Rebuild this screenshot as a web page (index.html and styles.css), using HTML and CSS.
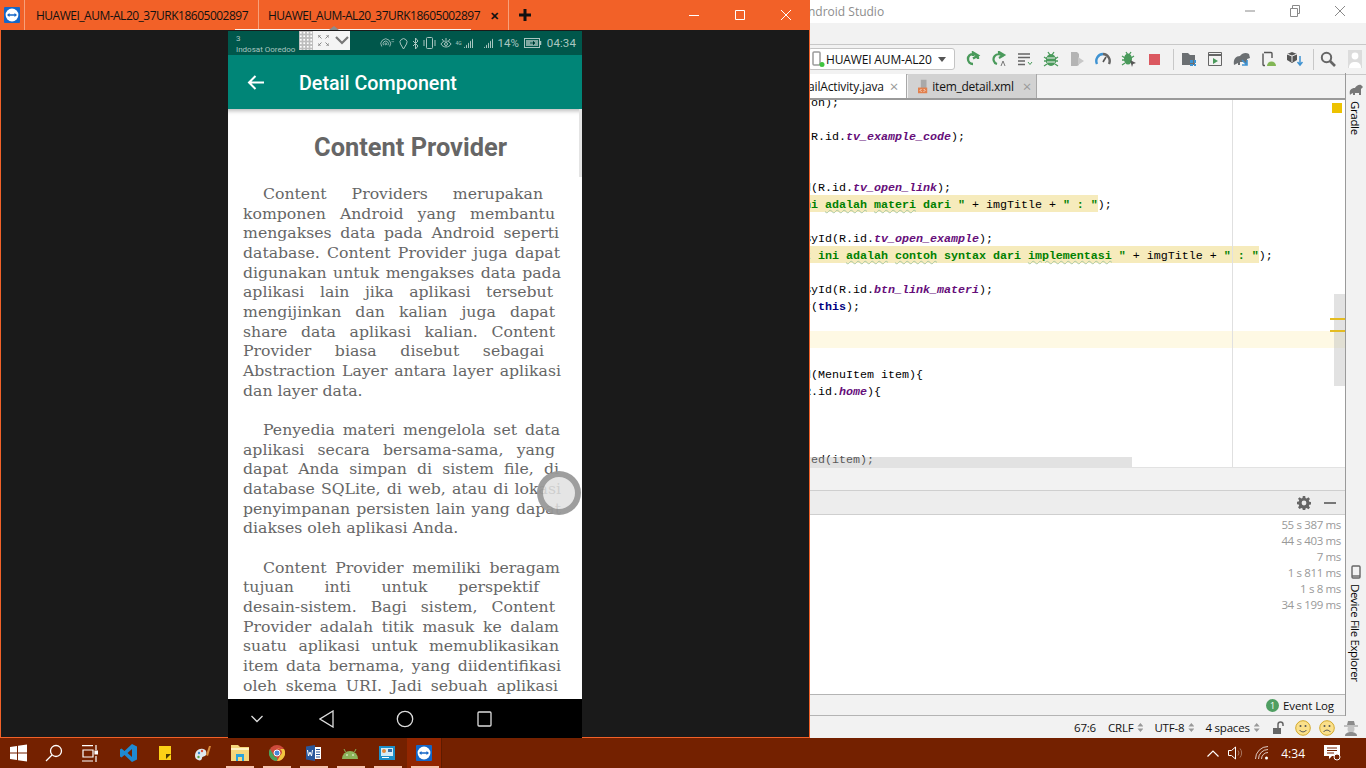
FILE: index.html
```html
<!DOCTYPE html>
<html lang="id">

<head>
    <meta charset="UTF-8">
    <title>Detail Component</title>
    <link rel="stylesheet" href="styles.css">
</head>

<body>

    <!-- Android Studio, sits behind the TeamViewer window -->
    <div class="studio">
        <div class="studio-title">
            <span class="studio-name">ndroid Studio</span>
            <div class="win-btns">
                <svg width="14" height="14" viewBox="0 0 14 14"><path d="M2 7h10" stroke="#8a8a8a"/></svg>
                <svg width="14" height="14" viewBox="0 0 14 14" fill="none" stroke="#8a8a8a"><path d="M2.5 4.5h7v8h-7zM4.5 4.5v-3h7v8h-2"/></svg>
                <svg width="14" height="14" viewBox="0 0 14 14" stroke="#8a8a8a"><path d="M2 2l10 10M12 2L2 12"/></svg>
            </div>
        </div>
        <div class="studio-menu"></div>
        <div class="toolbar">
            <div class="device-box">
                <svg width="13" height="17" viewBox="0 0 13 17"><rect x="1" y="1" width="7" height="13" rx="1" fill="none" stroke="#9a9a9a" stroke-width="1.500"/><circle cx="10" cy="13.500" r="2.500" fill="#3fc43f"/></svg>
                <span class="device-name">HUAWEI AUM-AL20</span>
                <i class="device-arrow"></i>
            </div>
            <div class="tools">
                <svg width="16" height="16" viewBox="0 0 16 16" fill="none" stroke="#4a9a5b" stroke-width="2.4"><path d="M13 8a5 5 0 1 0-5 5M8 5V1.5l5 3-5 3"/></svg>
                <svg width="16" height="16" viewBox="0 0 16 16" fill="none" stroke="#4a9a5b" stroke-width="2.2"><path d="M12 6a5 5 0 1 0-6 7M8 4V1l5 3-5 3"/><path d="M10 15l2-5 2 5" stroke="#777" stroke-width="1"/></svg>
                <svg width="16" height="16" viewBox="0 0 16 16" fill="none" stroke="#666" stroke-width="1.6"><path d="M1 3h12M1 6.5h12M1 10h7M1 13.5h7"/><path d="M11 11l2 2.5 2-2.5" stroke="#4a9a5b" stroke-width="1"/></svg>
                <svg width="16" height="16" viewBox="0 0 16 16"><ellipse cx="8" cy="9" rx="5" ry="6" fill="#4a9a5b"/><path d="M1 6l3 2M15 6l-3 2M1 10h3M15 10h-3M1 15l3-2M15 15l-3-2M3 7h10M3 11h10M5 1l2 3M11 1L9 4" stroke="#4a9a5b" stroke-width="1.3"/><path d="M4 7h8M4 11h8" stroke="#f2f2f2"/></svg>
                <svg width="16" height="16" viewBox="0 0 16 16"><path d="M2 1h6l2 2v11l-2 1H2z" fill="#b4b4b4"/><path d="M9 6l6 4-6 4z" fill="#c8c8c8"/></svg>
                <svg width="16" height="16" viewBox="0 0 16 16" fill="none"><path d="M2 13a7 7 0 0 1 6-10" stroke="#3f93d2" stroke-width="2.4"/><path d="M8 3a7 7 0 0 1 6 10" stroke="#666" stroke-width="2.4"/><path d="M8 11l3-5" stroke="#555" stroke-width="1.6"/></svg>
                <svg width="16" height="16" viewBox="0 0 16 16"><ellipse cx="7" cy="8" rx="4" ry="5.5" fill="#4a9a5b"/><path d="M1 5l3 2M13 5l-3 2M1 9h3M1 14l3-2M5 1l2 3M10 1L8 4" stroke="#4a9a5b" stroke-width="1.3"/><path d="M9 9l6 3-3 1-1 3z" fill="#555"/></svg>
                <span class="stop"></span>
                <span class="tool-sep"></span>
                <svg width="16" height="16" viewBox="0 0 16 16"><path d="M1 2h6l2 2h5v10H1z" fill="#6b6f72"/><path d="M9 9h3v3H9zM13 9h2v3h-2zM9 13h3v2H9zM13 13h2v2h-2z" fill="#3f93d2"/></svg>
                <svg width="16" height="16" viewBox="0 0 16 16" fill="none"><path d="M1.5 1.5h13v13h-13z" stroke="#666"/><path d="M1.5 4h13" stroke="#666" stroke-width="2"/><path d="M6 7l5 3-5 3z" fill="#4a9a5b"/></svg>
                <svg width="18" height="16" viewBox="0 0 18 16"><path d="M1 14c-1-6 2-9 6-9 2-3 6-4 9-2l1 4-3 1v6h-2v-3H7v3H5v-2l-2 1z" fill="#6b6f72"/><path d="M9 9l5 5M14 9v5H9" stroke="#3f93d2" stroke-width="1.6" fill="none"/></svg>
                <svg width="16" height="16" viewBox="0 0 16 16" fill="none"><path d="M3 1.5h7a1 1 0 0 1 1 1V7M4 14.5H3a1 1 0 0 1-1-1v-11" stroke="#555" stroke-width="1.4"/><path d="M6 15a4.5 4.5 0 0 1 9 0z" fill="#82b655"/></svg>
                <svg width="16" height="16" viewBox="0 0 16 16"><path d="M5 1l5 2v6l-5 3-5-3V3z" fill="#555"/><path d="M5 5v6" stroke="#f2f2f2"/><path d="M0 3l5 2 5-2" stroke="#f2f2f2" fill="none"/><path d="M13 5v9M10.5 11l2.5 3 2.5-3" stroke="#3f93d2" stroke-width="1.5" fill="none"/></svg>
                <span class="tool-sep sep-last"></span>
                <svg width="16" height="16" viewBox="0 0 16 16" fill="none" stroke="#666" stroke-width="2"><circle cx="6.5" cy="6.5" r="4.7"/><path d="M10 10l5 5" stroke-width="2.6"/></svg>
                <svg class="avatar" width="14" height="18" viewBox="0 0 14 18"><path d="M0 0h14v18H0z" fill="#dcdcdc"/><circle cx="7" cy="6" r="3.4" fill="#fff"/><path d="M1 18c0-5 3-6 6-6s6 1 6 6z" fill="#fff"/></svg>
            </div>
        </div>
        <div class="tabs">
            <div class="tab tab-on">ailActivity.java <span class="tab-x">×</span></div>
            <div class="tab">
                <svg width="16" height="19" viewBox="0 0 16 19"><path d="M4 0h8v12H4z" fill="#a9a9a9"/><path d="M0 11h13v8H0z" fill="#e2804d"/><path d="M5 13l-2 2 2 2M8 13l2 2-2 2" stroke="#fff" fill="none"/></svg>
                item_detail.xml <span class="tab-x">×</span>
            </div>
        </div>
        <div class="editor">
            <div class="code">
                <div class="cl">ton);</div>
                <div class="cl"></div>
                <div class="cl">(R.id.<em>tv_example_code</em>);</div>
                <div class="cl"></div>
                <div class="cl"></div>
                <div class="cl">d(R.id.<em>tv_open_link</em>);</div>
                <div class="cl"><span class="warn"><b class="str">ni <u>adalah</u> <u>materi</u> dari " </b>+ imgTitle + <b class="str">" : "</b></span>);</div>
                <div class="cl"></div>
                <div class="cl">ById(R.id.<em>tv_open_example</em>);</div>
                <div class="cl"><span class="warn"><b class="str">t ini <u>adalah</u> <u>contoh</u> syntax dari <u>implementasi</u> " </b>+ imgTitle + <b class="str">" : "</b></span>);</div>
                <div class="cl"></div>
                <div class="cl">ById(R.id.<em>btn_link_materi</em>);</div>
                <div class="cl">r(<b class="kw">this</b>);</div>
                <div class="cl"></div>
                <div class="cl cl-cur"></div>
                <div class="cl"></div>
                <div class="cl">d(MenuItem item){</div>
                <div class="cl">R.id.<em>home</em>){</div>
                <div class="cl"></div>
                <div class="cl"></div>
                <div class="cl"></div>
                <div class="cl">ted(item);</div>
            </div>
            <div class="margin-line"></div>
            <div class="hscroll"></div>
            <div class="vscroll"></div>
            <div class="mark-square"></div>
            <div class="mark-tick tick-a"></div>
            <div class="mark-tick tick-b"></div>
        </div>
        <div class="gap-bar"></div>
        <div class="panel-head">
            <svg width="14" height="14" viewBox="0 0 14 14"><path fill="#666" fill-rule="evenodd" d="M5.8 0h2.4l.3 2 1.2.5L11.400 1.300 13 3l-1.200 1.600.5 1.200 1.700.3v2.400l-1.700.3-.5 1.200 1.200 1.600-1.600 1.700-1.700-1.200-1.200.5-.3 1.600H5.800l-.3-1.600-1.200-.5L2.600 13 1 11.300l1.200-1.600-.5-1.200L0 8.200V5.800l1.700-.3.5-1.200L1 2.700 2.600 1.300l1.700 1.200 1.200-.5zM7 4.600a2.400 2.400 0 1 0 0 4.800 2.400 2.400 0 0 0 0-4.800z"/></svg>
            <span class="panel-min"></span>
        </div>
        <div class="console">
            <div>55 s 387 ms</div>
            <div>44 s 403 ms</div>
            <div>7 ms</div>
            <div>1 s 811 ms</div>
            <div>1 s 8 ms</div>
            <div>34 s 199 ms</div>
        </div>
        <div class="event-bar">
            <span class="event-dot">1</span>
            <span>Event Log</span>
        </div>
        <div class="status">
            <span class="st-pos">67:6</span>
            <span class="st-item">CRLF <i class="updown"></i></span>
            <span class="st-item">UTF-8 <i class="updown"></i></span>
            <span class="st-item">4 spaces <i class="updown"></i></span>
            <svg class="st-lock" width="14" height="14" viewBox="0 0 14 14"><path d="M2 7h8v6H2z" fill="#666"/><path d="M7 7V3.500a2.500 2.500 0 0 1 5 0V5" stroke="#666" stroke-width="1.500" fill="none"/></svg>
            <svg width="16" height="16" viewBox="0 0 16 16"><circle cx="8" cy="8" r="7.300" fill="#fbe08a" stroke="#d3a92c"/><circle cx="5.500" cy="6" r="1" fill="#555"/><circle cx="10.500" cy="6" r="1" fill="#555"/><path d="M4.500 10c2 2.500 5 2.500 7 0" stroke="#555" fill="none"/></svg>
            <svg width="16" height="16" viewBox="0 0 16 16"><circle cx="8" cy="8" r="7.300" fill="#fbe08a" stroke="#d3a92c"/><circle cx="5.500" cy="6" r="1" fill="#555"/><circle cx="10.500" cy="6" r="1" fill="#555"/><path d="M4.500 12c2-2.500 5-2.500 7 0" stroke="#555" fill="none"/></svg>
            <svg width="16" height="16" viewBox="0 0 16 16"><path d="M4 5l1-4h6l1 4zM1 5.500h14v1H1z" fill="#8c8c8c"/><circle cx="8" cy="9" r="3.500" fill="#c4c4c4"/><path d="M2 16c0-3 3-4 6-4s6 1 6 4z" fill="#8c8c8c"/></svg>
        </div>
        <div class="side">
            <svg class="side-gradle" width="14" height="12" viewBox="0 0 14 12"><path d="M1 11c-1-5 1-7 5-7 1-2 4-4 6-3l2 2-2 2v6h-2V9H6v2H4V9L2 10z" fill="#777"/></svg>
            <span class="side-text">Gradle</span>
            <svg class="side-phone" width="10" height="14" viewBox="0 0 10 14" fill="none" stroke="#666" stroke-width="1.400"><rect x="1" y="1" width="8" height="12" rx="1"/><path d="M1 11h8"/></svg>
            <span class="side-text">Device File Explorer</span>
        </div>
    </div>

    <!-- TeamViewer window with the phone screen -->
    <div class="viewer">
        <div class="viewer-tabs">
            <svg class="tv-logo" width="16" height="16" viewBox="0 0 16 16"><rect width="16" height="16" rx="1" fill="#1467c8"/><circle cx="8" cy="8" r="6.400" fill="#fff"/><path d="M3 8l2.500-2v1.300h5V6L13 8l-2.500 2V8.700h-5V10z" fill="#1467c8"/></svg>
            <div class="vtab">HUAWEI_AUM-AL20_37URK18605002897</div>
            <div class="vtab vtab-on">HUAWEI_AUM-AL20_37URK18605002897 <span class="vtab-x">✕</span></div>
            <div class="vtab-plus">
                <svg width="12" height="12" viewBox="0 0 12 12"><path d="M0 4.500h4.500V0h3v4.500H12v3H7.500V12h-3V7.500H0z" fill="#111"/></svg>
            </div>
            <div class="vwin">
                <svg width="12" height="12" viewBox="0 0 12 12"><path d="M1 6.500h10" stroke="#fff"/></svg>
                <svg width="12" height="12" viewBox="0 0 12 12"><path d="M1.500 1.500h9v9h-9z" stroke="#fff" fill="none"/></svg>
                <svg width="12" height="12" viewBox="0 0 12 12"><path d="M1 1l10 10M11 1L1 11" stroke="#fff"/></svg>
            </div>
        </div>
        <div class="viewer-body">
            <div class="phone">
                <div class="android-status">
                    <div class="carrier"><span>3</span><span>Indosat Ooredoo</span></div>
                    <div class="status-right">
                        <svg width="15" height="14" viewBox="0 0 17 14" fill="none" stroke="#a9c6c0"><path d="M2 11a5.500 5.500 0 1 1 9 0M4 9.500a3 3 0 1 1 5 0"/><circle cx="6.500" cy="8" r="1"/><path d="M13 3h3M13 5.500h3" stroke-width=".7"/></svg>
                        <svg width="9" height="13" viewBox="0 0 9 13" fill="none" stroke="#a9c6c0"><path d="M4.500 12L1.500 7a3.500 3.500 0 1 1 6 0z"/></svg>
                        <svg width="7" height="13" viewBox="0 0 7 13" fill="none" stroke="#a9c6c0"><path d="M1 4l5 5-2.500 3V1L6 4 1 9"/></svg>
                        <svg width="13" height="12" viewBox="0 0 13 12" fill="none" stroke="#a9c6c0"><rect x="3.500" y=".5" width="6" height="11" rx="1"/><path d="M1 3v6M12 3v6"/></svg>
                        <svg width="12" height="11" viewBox="0 0 12 11" fill="none" stroke="#a9c6c0"><path d="M1 6c2-4 8-4 10 0-2 4-8 4-10 0z"/><circle cx="6" cy="6" r="1.500"/><path d="M2 1l1.500 2M10 1L8.500 3M6 0v2"/></svg>
                        <span class="signal-wrap"><span class="net">4G</span><i class="bars"></i></span>
                        <i class="bars bars-gap"></i>
                        <span class="pct">14%</span>
                        <svg width="20" height="10" viewBox="0 0 18 10"><rect x=".5" y=".5" width="15" height="9" fill="none" stroke="#a9c6c0"/><rect x="2" y="2" width="12" height="6" fill="#7fa9a1"/><path d="M16.500 3v4" stroke="#a9c6c0" stroke-width="1.500"/><path d="M6 5h5M9 3l2 2-2 2" stroke="#00574b"/></svg>
                        <span class="clock">04:34</span>
                    </div>
                </div>
                <div class="appbar">
                    <svg width="17" height="15" viewBox="0 0 17 15" fill="none" stroke="#fff" stroke-width="2"><path d="M17 7.500H2M8.500 1L2 7.500 8.500 14"/></svg>
                    <h1 class="appbar-title">Detail Component</h1>
                </div>
                <div class="detail">
                    <h2 class="detail-title">Content Provider</h2>
                    <p class="para">
                        <span class="ln ind r543">Content Providers merupakan</span>
                        <span class="ln r555">komponen Android yang membantu</span>
                        <span class="ln r559">mengakses data pada Android seperti</span>
                        <span class="ln r560">database. Content Provider juga dapat</span>
                        <span class="ln r561">digunakan untuk mengakses data pada</span>
                        <span class="ln r553">aplikasi lain jika aplikasi tersebut</span>
                        <span class="ln r555">mengijinkan dan kalian juga dapat</span>
                        <span class="ln r555">share data aplikasi kalian. Content</span>
                        <span class="ln r544">Provider biasa disebut sebagai</span>
                        <span class="ln r561">Abstraction Layer antara layer aplikasi</span>
                        <span class="ln end">dan layer data.</span>
                    </p>
                    <p class="para">
                        <span class="ln ind r560">Penyedia materi mengelola set data</span>
                        <span class="ln r555">aplikasi secara bersama-sama, yang</span>
                        <span class="ln r559">dapat Anda simpan di sistem file, di</span>
                        <span class="ln r561">database SQLite, di web, atau di lokasi</span>
                        <span class="ln r561">penyimpanan persisten lain yang dapat</span>
                        <span class="ln end">diakses oleh aplikasi Anda.</span>
                    </p>
                    <p class="para">
                        <span class="ln ind r560">Content Provider memiliki beragam</span>
                        <span class="ln r539">tujuan inti untuk perspektif</span>
                        <span class="ln r555">desain-sistem. Bagi sistem, Content</span>
                        <span class="ln r559">Provider adalah titik masuk ke dalam</span>
                        <span class="ln r559">suatu aplikasi untuk memublikasikan</span>
                        <span class="ln r561">item data bernama, yang diidentifikasi</span>
                        <span class="ln r558">oleh skema URI. Jadi sebuah aplikasi</span>
                    </p>
                    <div class="page-scroll"></div>
                </div>
                <div class="navbar">
                    <svg width="14" height="8" viewBox="0 0 14 8" fill="none" stroke="#ddd" stroke-width="1.300"><path d="M1.500 1L7 6.500 12.500 1"/></svg>
                    <svg class="nav-back" width="15" height="18" viewBox="0 0 15 18" fill="none" stroke="#ddd" stroke-width="1.300"><path d="M14 1v16L1 9z"/></svg>
                    <svg width="18" height="18" viewBox="0 0 18 18" fill="none" stroke="#ddd" stroke-width="1.300"><circle cx="9" cy="9" r="7.700"/></svg>
                    <svg width="15" height="16" viewBox="0 0 15 16" fill="none" stroke="#ddd" stroke-width="1.300"><rect x="1" y="1" width="13" height="14" rx="1"/></svg>
                </div>
            </div>
        </div>
        <div class="tv-line"></div>
        <div class="tv-notch"></div>
        <div class="tv-panel">
            <div class="tv-grip"></div>
            <div class="tv-tools">
                <svg width="11" height="11" viewBox="0 0 11 11" fill="none" stroke="#888"><path d="M0 3V0h3M8 0h3v3M11 8v3H8M3 11H0V8M1 1l2.500 2.500M10 1L7.500 3.500M10 10L7.500 7.500M1 10l2.500-2.500"/></svg>
                <svg width="14" height="9" viewBox="0 0 14 9" fill="none" stroke="#777" stroke-width="2.200"><path d="M1 1l6 6 6-6"/></svg>
            </div>
        </div>
        <div class="touch-dot"></div>
    </div>

    <div class="taskbar">
        <div class="task-apps">
            <svg class="task-app" width="17" height="18" viewBox="0 0 17 18"><path d="M0 3l7-1v6.500H0zM8 1.800L17 .5v8H8zM0 9.500h7V16l-7-1zM8 9.500h9v8l-9-1.300z" fill="#fff"/></svg>
            <svg class="task-app" width="18" height="18" viewBox="0 0 18 18" fill="none" stroke="#fff" stroke-width="1.300"><circle cx="11" cy="7" r="5.500"/><path d="M7 11l-6 6"/></svg>
            <svg class="task-app" width="16" height="17" viewBox="0 0 16 17" fill="none" stroke="#fff" stroke-width="1.200"><path d="M0 .6h11M1 5h10v7H1zM0 16h11M14 0v5M14 11v6"/><path d="M13 6h3v3h-3z" fill="#fff"/></svg>
            <svg class="task-app" width="17" height="18" viewBox="0 0 17 18"><path d="M12 0l5 2.500v13L12 18 4.500 11 1.500 13.500 0 12.500V5.500L1.500 4.500 4.500 7zM12 5L7.500 9l4.500 4z" fill="#1f8ad2"/></svg>
            <svg class="task-app" width="12" height="14" viewBox="0 0 12 14"><path d="M0 0h12v14H0z" fill="#fcd116"/><path d="M7 13V8h5z" fill="#4b3b00"/></svg>
            <svg class="task-app" width="17" height="17" viewBox="0 0 17 17"><path d="M0 11c0-5 4-8 8-7 3 .5 4 3 3 6-1 2-4 1-4 3 0 2-2 3-4 2s-3-2-3-4z" fill="#dfe8ee"/><circle cx="4" cy="8" r="1.200" fill="#3a8ad0"/><circle cx="7" cy="6" r="1.200" fill="#e04f3c"/><circle cx="3.500" cy="12" r="1.200" fill="#5aa64a"/><path d="M11 10l3-9h2l-3 10z" fill="#d98a3a"/></svg>
            <svg class="task-app" width="18" height="16" viewBox="0 0 18 16"><path d="M0 0h7l2 2h9v14H0z" fill="#f6d77c"/><path d="M0 3h18v2H0z" fill="#fff2c4"/><path d="M5 9h8v7h-2v-4H7v4H5z" fill="#2aa3dc"/></svg>
            <svg class="task-app" width="16" height="16" viewBox="0 0 16 16"><circle cx="8" cy="8" r="8" fill="#cf4a3b"/><path d="M8 16a8 8 0 0 1-7-12l4 7a3.500 3.500 0 0 0 3 1.500z" fill="#4aa35a"/><path d="M8 4h7a8 8 0 0 1-7 12l3.500-6A3.500 3.500 0 0 0 8 4z" fill="#f2c53d"/><circle cx="8" cy="8" r="3" fill="#4a88d8" stroke="#fff"/></svg>
            <svg class="task-app" width="15" height="16" viewBox="0 0 15 16"><path d="M0 1.500L9 0v16L0 14.500z" fill="#2b579a"/><path d="M9 2h6v12H9z" fill="#fff"/><path d="M10 4.500h4M10 7h4M10 9.500h4M10 12h4" stroke="#2b579a"/><path d="M1.500 5l1 6 1.500-4 1.500 4 1-6" stroke="#fff" fill="none"/></svg>
            <svg class="task-app" width="16" height="11" viewBox="0 0 16 11"><path d="M0 11a8 8 0 0 1 16 0z" fill="#8cb35a"/><path d="M3.500 4L2 1M12.500 4L14 1" stroke="#8cb35a"/><circle cx="5" cy="7" r=".8" fill="#fff"/><circle cx="11" cy="7" r=".8" fill="#fff"/></svg>
            <svg class="task-app" width="16" height="14" viewBox="0 0 16 14"><path d="M0 0h16v14H0z" fill="#1d8fc9"/><path d="M2 2h12v8H2z" fill="#d5ecf7"/><circle cx="5" cy="5" r="2" fill="#e48a3a"/><path d="M9 3h4v3H9z" fill="#3a6ea5"/><path d="M3 11.500h7" stroke="#fff"/></svg>
            <div class="task-active">
                <svg width="16" height="16" viewBox="0 0 16 16"><rect width="16" height="16" rx="1" fill="#1467c8"/><circle cx="8" cy="8" r="6.400" fill="#fff"/><path d="M3 8l2.500-2v1.300h5V6L13 8l-2.500 2V8.700h-5V10z" fill="#1467c8"/></svg>
            </div>
            <span class="under"></span>
        </div>
        <div class="tray">
            <svg width="12" height="7" viewBox="0 0 12 7" fill="none" stroke="#fff" stroke-width="1.200"><path d="M.5 6.500L6 1l5.500 5.500"/></svg>
            <svg class="tray-sound" width="16" height="14" viewBox="0 0 16 14" fill="none" stroke="#fff"><path d="M.5 4.500h3L7.500 1v12l-4-3.500h-3z"/><path d="M10 4.500a4 4 0 0 1 0 5M12 2.500a7 7 0 0 1 0 9" stroke="#a8755f"/></svg>
            <svg class="tray-wifi" width="16" height="14" viewBox="0 0 16 14" fill="none" stroke="#fff"><path d="M.5 13a12.500 12.500 0 0 1 12.500-12.500M3.500 13A9.500 9.500 0 0 1 13 3.500M6.500 13A6.500 6.500 0 0 1 13 6.500" stroke-opacity=".75"/><circle cx="11.500" cy="12" r="1.500" fill="#fff" stroke="none"/></svg>
            <span class="tray-time">4:34</span>
            <svg class="tray-note" width="17" height="16" viewBox="0 0 17 16"><path d="M0 0h16v11H8l-3 3v-3H0z" fill="#fff"/><path d="M3 3h10M3 5.500h10M3 8h7" stroke="#742100"/><circle cx="13" cy="12" r="3" fill="#742100" stroke="#fff"/></svg>
        </div>
    </div>

</body>

</html>
```

FILE: styles.css
```css
html, body {
    margin: 0;
    height: 768px;
    overflow: hidden;
    background: #742100;
    font-family: "Open Sans", "Noto Sans", sans-serif;
}

/* windows on the desktop */
.studio {
    position: absolute;
    left: 700px;
    top: 0;
    width: 666px;
    height: 738px;
    background: #f2f2f2;
    display: flex;
    flex-direction: column;
    padding-right: 21px;
    box-sizing: border-box;
    font-size: 12px;
    color: #111;
}

.viewer {
    position: absolute;
    left: 0;
    top: 0;
    width: 810px;
    height: 738px;
    box-sizing: border-box;
    border: 1px solid #f26128;
    border-top: 0;
    background: #1a1a1a;
}

.taskbar {
    position: absolute;
    left: 0;
    top: 738px;
    width: 1366px;
    height: 30px;
    background: #742100;
    display: flex;
    justify-content: space-between;
}

/* android studio */
.studio-title {
    height: 23px;
    width: 666px;
    background: #fff;
    display: flex;
    align-items: center;
    justify-content: space-between;
    box-sizing: border-box;
    padding-left: 108px;
}

.studio-name {
    color: #8d8d8d;
    font-size: 12px;
}

.win-btns {
    display: flex;
    gap: 31px;
    padding: 0 19px 2px 0;
}

.studio-menu {
    height: 21px;
    width: 666px;
    border-bottom: 1px solid #c8c8c8;
}

.toolbar {
    height: 28px;
    width: 666px;
    padding-bottom: 1px;
    box-sizing: content-box;
    margin-bottom: -1px;
    display: flex;
    align-items: center;
    border-bottom: 1px solid #c8c8c8;
}

.device-box {
    width: 147px;
    height: 22px;
    margin-left: 108px;
    box-sizing: border-box;
    background: #fff;
    border: 1px solid #c4c4c4;
    border-radius: 3px;
    display: flex;
    align-items: center;
    padding: 0 8px 0 3px;
    font-size: 12px;
    flex-shrink: 0;
}

.device-name {
    margin: 0 auto 0 1px;
    letter-spacing: -.15px;
}

.device-arrow {
    border: 4px solid transparent;
    border-top: 5px solid #555;
    border-bottom: 0;
}

.tools {
    display: flex;
    align-items: center;
    gap: 10px;
    margin-left: 10px;
}

.tools svg {
    flex-shrink: 0;
}

.stop {
    width: 11px;
    height: 11px;
    margin: 0 3px 0 2px;
    background: #db5860;
}

.tool-sep {
    width: 1px;
    height: 21px;
    margin-right: -3px;
    background: #c8c8c8;
}

.sep-last {
    margin-right: -4px;
}

.avatar {
    margin-left: 2px;
}

.tabs {
    height: 24px;
    display: flex;
    padding-left: 100px;
    border-bottom: 2px solid #9a9a9a;
    font-size: 12px;
}

.tab {
    display: flex;
    align-items: center;
    gap: 3px;
    padding: 0 5px 0 10px;
    width: 129px;
    box-sizing: border-box;
    background: #d2d2d2;
    border-right: 1px solid #a8a8a8;
    letter-spacing: -.25px;
}

.tab-on {
    width: 107px;
    margin-right: 1px;
    background: #fff;
    border-right: 1px solid #a8a8a8;
    padding-left: 8px;
    gap: 0;
    letter-spacing: -.15px;
    white-space: nowrap;
}

.tab-x {
    color: #9a9a9a;
    font-size: 15px;
    margin-left: 6px;
}

.editor {
    position: relative;
    height: 367px;
    background: #fff;
    overflow: hidden;
}

/* line boxes sit on a 17px grid, the taller line-height drops the text into them */
.code {
    margin-top: -7px;
    padding-left: 104px;
    font: 11.67px/21px "Liberation Mono", monospace;
    color: #000;
}

.cl {
    height: 17px;
    white-space: pre;
}

.cl-cur {
    margin-left: -104px;
    background: #fef9e4;
}

.code em {
    color: #660e7a;
    font-weight: bold;
}

.code u {
    text-decoration: underline wavy #a9c79f 1px;
}

.warn {
    display: inline-block;
    height: 17px;
    background: #f6ebbc;
}

.str {
    color: #008000;
    font-weight: bold;
}

.kw {
    color: #000080;
}

.margin-line {
    position: absolute;
    left: 532px;
    top: 0;
    bottom: 0;
    width: 1px;
    background: #e0e0e0;
}

.hscroll {
    position: absolute;
    left: 0;
    top: 357px;
    width: 432px;
    height: 10px;
    background: rgba(190, 190, 190, .45);
}

.vscroll {
    position: absolute;
    left: 634px;
    top: 194px;
    width: 11px;
    height: 92px;
    background: rgba(190, 190, 190, .45);
}

.mark-square {
    position: absolute;
    left: 632px;
    top: 3px;
    width: 10px;
    height: 10px;
    background: #edc200;
}

.mark-tick {
    position: absolute;
    left: 630px;
    width: 15px;
    height: 2px;
    background: #e4bc22;
}

.tick-a {
    top: 218px;
}

.tick-b {
    top: 230px;
}

.gap-bar {
    height: 22px;
    border-top: 1px solid #e2e2e2;
}

.panel-head {
    height: 23px;
    background: #ededed;
    border-top: 1px solid #cfcfcf;
    border-bottom: 1px solid #cfcfcf;
    display: flex;
    align-items: center;
    justify-content: flex-end;
    gap: 13px;
    padding-right: 9px;
}

.panel-min {
    width: 12px;
    height: 2px;
    background: #777;
}

.console {
    height: 180px;
    box-sizing: border-box;
    padding: 2px 4px 0 0;
    background: #fff;
    text-align: right;
    color: #999;
    font-size: 11.5px;
    letter-spacing: -.35px;
    line-height: 16px;
    border-bottom: 1px solid #b4b4b4;
}

.event-bar {
    height: 20px;
    display: flex;
    align-items: center;
    justify-content: flex-end;
    gap: 4px;
    padding-right: 11px;
    font-size: 11.5px;
    letter-spacing: -.1px;
    border-bottom: 1px solid #b4b4b4;
}

.event-dot {
    width: 13px;
    height: 13px;
    border-radius: 50%;
    background: #4f9e62;
    color: #fff;
    font-size: 9px;
    line-height: 13px;
    text-align: center;
}

.status {
    flex: 1;
    width: 666px;
    display: flex;
    align-items: center;
    font-size: 11.5px;
    letter-spacing: -.2px;
    padding: 1px 0 0 374px;
    box-sizing: border-box;
    gap: 8px;
}

.st-pos {
    margin-right: 4px;
}

.st-item {
    margin-right: 3px;
    display: inline-flex;
    align-items: center;
    gap: 4px;
}

.updown {
    display: inline-block;
    width: 6px;
    height: 9px;
    background: #999;
    clip-path: polygon(50% 0, 100% 40%, 0 40%, 50% 0, 50% 100%, 0 60%, 100% 60%, 50% 100%);
}

.st-lock {
    margin-right: 2px;
}

.side {
    position: absolute;
    left: 645px;
    top: 73px;
    width: 21px;
    height: 643px;
    box-sizing: border-box;
    border-left: 1px solid #9a9a9a;
    display: flex;
    flex-direction: column;
    align-items: center;
    font-size: 11.5px;
    letter-spacing: -.35px;
    color: #000;
}

.side-gradle {
    margin-top: 11px;
}

.side-text {
    writing-mode: vertical-rl;
    margin: 5px 2px 0 0;
}

.side-phone {
    margin-top: 430px;
}

/* teamviewer */
.viewer-tabs {
    height: 30px;
    background: #f26128;
    display: flex;
    align-items: center;
    margin-left: -1px;
}

.tv-logo {
    margin: 0 4px;
    flex-shrink: 0;
}

.vtab {
    width: 234px;
    height: 30px;
    box-sizing: border-box;
    border-left: 1px solid #f7a07a;
    display: flex;
    align-items: center;
    padding-left: 11px;
    font-size: 12px;
    letter-spacing: -.5px;
    white-space: nowrap;
    color: #111;
    flex-shrink: 0;
}

.vtab-on {
    width: 251px;
    border-right: 1px solid #f7a07a;
    padding-left: 9px;
    gap: 10px;
}

.vtab-x {
    font-size: 11px;
    font-weight: bold;
}

.vtab-plus {
    margin-left: 10px;
    display: flex;
}

.vwin {
    margin-left: auto;
    display: flex;
    gap: 34px;
    padding-right: 17px;
}

.viewer-body {
    height: 708px;
    padding-left: 227px;
}

.phone {
    width: 354px;
    height: 707px;
    margin-top: 1px;
    display: flex;
    flex-direction: column;
}

.android-status {
    height: 24px;
    background: #00574b;
    display: flex;
    justify-content: space-between;
    padding: 0 6px 0 8px;
    color: #a9c6c0;
}

.carrier {
    display: flex;
    flex-direction: column;
    font-size: 8px;
    line-height: 11px;
    padding-top: 2px;
    font-family: Roboto, sans-serif;
}

.status-right {
    display: flex;
    align-items: center;
    gap: 4px;
    font-family: Roboto, sans-serif;
    font-size: 11.5px;
}

.signal-wrap {
    display: flex;
    align-items: center;
    gap: 1px;
}

.net {
    font-size: 5px;
    line-height: 5px;
    width: 7px;
}

.bars {
    display: inline-block;
    width: 10px;
    height: 10px;
    background: repeating-linear-gradient(90deg, #a9c6c0 0 1px, transparent 1px 2px);
    clip-path: polygon(0 100%, 100% 0, 100% 100%);
}

.bars-gap {
    margin-left: 6px;
}

.clock {
    margin-left: 0;
    letter-spacing: .1px;
}

.appbar {
    height: 54px;
    background: #008577;
    display: flex;
    align-items: center;
    padding-left: 19px;
    color: #fff;
}

.appbar-title {
    margin: 0 0 0 35px;
    font: 500 19.7px Roboto, sans-serif;
    padding-top: 2px;
}

.detail {
    position: relative;
    flex: 1;
    min-height: 0;
    overflow: hidden;
    background: #fff;
    box-shadow: inset 0 5px 4px -3px #bbb;
    padding: 0 0 0 15px;
    color: #666;
    font: 15.7px/19.67px "DejaVu Serif", serif;
}

.detail-title {
    margin: 22px 0 21px -15px;
    text-align: center;
    font: bold 25.4px/32px Roboto, sans-serif;
    padding-left: 11px;
}

.para {
    margin: 0 0 19.7px;
}

.ln {
    display: block;
    white-space: nowrap;
    text-align: justify;
    text-align-last: justify;
}

.ind {
    padding-left: 20px;
}

.end {
    text-align-last: left;
}

/* right edge of each justified line, named after its x in the picture */
.r539 { width: 296px; }
.r543 { width: 280px; }
.r544 { width: 301px; }
.r553 { width: 310px; }
.r555 { width: 312px; }
.r558 { width: 315px; }
.r559 { width: 316px; }
.r560 { width: 317px; }
.r561 { width: 318px; }
.ind.r560 { width: 297px; }

.page-scroll {
    position: absolute;
    right: 0;
    top: 0;
    width: 3px;
    height: 68px;
    background: #e4e4e4;
}

.navbar {
    height: 39px;
    background: #000;
    display: flex;
    align-items: center;
    gap: 62.5px;
    padding-left: 22px;
    flex-shrink: 0;
}

.nav-back {
    margin-left: -8px;
}

/* things laid over the phone */
.tv-line {
    position: absolute;
    left: 234px;
    top: 29px;
    width: 236px;
    height: 1px;
    background: #f7f3ef;
}

.tv-notch {
    position: absolute;
    left: 328px;
    top: 26px;
    border: 5px solid transparent;
    border-top: 0;
    border-bottom: 4px solid #8c8c8c;
}

.tv-panel {
    position: absolute;
    left: 298px;
    top: 31px;
    width: 51px;
    height: 19px;
    display: flex;
}

.tv-grip {
    width: 14px;
    background: radial-gradient(#fff 1px, transparent 1.2px) 0 0 / 3.500px 3.500px, #bdbdbd;
}

.tv-tools {
    flex: 1;
    background: #f4f4f4;
    display: flex;
    align-items: center;
    gap: 6px;
    padding-left: 5px;
}

.touch-dot {
    position: absolute;
    left: 536px;
    top: 471px;
    width: 44px;
    height: 44px;
    box-sizing: border-box;
    border: 6px solid rgba(120, 120, 120, .65);
    border-radius: 50%;
    background: rgba(225, 225, 225, .85);
}

/* taskbar */
.task-apps {
    position: relative;
    display: flex;
    align-items: center;
    width: 442px;
}

.task-apps .task-app:nth-child(1) { margin-left: 10px; }
.task-apps .task-app:nth-child(2) { margin-left: 18px; }
.task-apps .task-app:nth-child(3) { margin-left: 19px; }
.task-apps .task-app:nth-child(4) { margin-left: 22px; }
.task-apps .task-app:nth-child(5) { margin-left: 22px; }
.task-apps .task-app:nth-child(6) { margin-left: 24px; }
.task-apps .task-app:nth-child(7) { margin-left: 19px; }
.task-apps .task-app:nth-child(8) { margin-left: 20px; }
.task-apps .task-app:nth-child(9) { margin-left: 21px; }
.task-apps .task-app:nth-child(10) { margin-left: 21px; }
.task-apps .task-app:nth-child(11) { margin-left: 21px; }

.task-active {
    height: 30px;
    width: 34px;
    margin-left: 12px;
    background: #922600;
    display: flex;
    align-items: center;
    justify-content: center;
    border-right: 1px solid #5e1b00;
}

.under {
    position: absolute;
    left: 226px;
    bottom: 0;
    width: 216px;
    height: 2px;
    background: repeating-linear-gradient(90deg, #f6c3ae 0 28px, transparent 28px 37px);
}

.tray {
    display: flex;
    align-items: center;
    color: #fff;
    font-size: 12px;
    padding-right: 25px;
}

.tray-sound {
    margin-left: 9px;
}

.tray-wifi {
    margin-left: 11px;
}

.tray-time {
    margin-left: 10px;
}

.tray-note {
    margin-left: 19px;
}
```
